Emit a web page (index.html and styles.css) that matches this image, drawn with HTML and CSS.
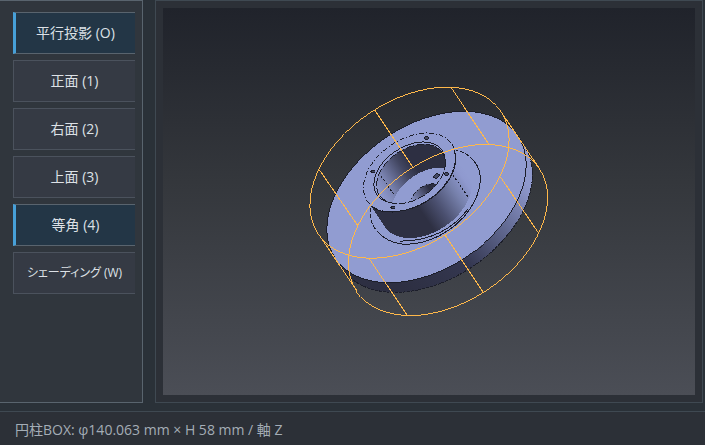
FILE: index.html
```html
<!DOCTYPE html>
<html lang="ja">
<head>
<meta charset="utf-8">
<title>3D ビュー</title>
<link rel="stylesheet" href="styles.css">
</head>
<body>
<div class="workspace">
  <nav class="sidebar" aria-label="表示">
    <button type="button" class="view-button active" aria-pressed="true">平行投影 (O)</button>
    <button type="button" class="view-button">正面 (1)</button>
    <button type="button" class="view-button">右面 (2)</button>
    <button type="button" class="view-button">上面 (3)</button>
    <button type="button" class="view-button active" aria-pressed="true">等角 (4)</button>
    <button type="button" class="view-button compact">シェーディング (W)</button>
  </nav>
  <main class="viewport">
    <svg class="scene" viewBox="163 8 532 387" role="img" aria-label="円柱BOX">
      <defs>
        <linearGradient id="rim" gradientUnits="userSpaceOnUse" x1="405" y1="290" x2="528" y2="185">
          <stop offset="0" stop-color="#2d2f42"/>
          <stop offset=".4" stop-color="#343750"/>
          <stop offset=".75" stop-color="#666e98"/>
          <stop offset="1" stop-color="#8f99cd"/>
        </linearGradient>
        <linearGradient id="hub" gradientUnits="userSpaceOnUse" x1="427" y1="220" x2="476" y2="187">
          <stop offset="0" stop-color="#2e3043"/>
          <stop offset=".3" stop-color="#4b5070"/>
          <stop offset=".65" stop-color="#7680ab"/>
          <stop offset=".9" stop-color="#8f99cf"/>
          <stop offset="1" stop-color="#919cd1"/>
        </linearGradient>
        <linearGradient id="bore" gradientUnits="userSpaceOnUse" x1="376" y1="192" x2="415" y2="166">
          <stop offset="0" stop-color="#919cd1"/>
          <stop offset=".3" stop-color="#7b84b2"/>
          <stop offset=".75" stop-color="#424661"/>
          <stop offset="1" stop-color="#2d2f42"/>
        </linearGradient>
        <linearGradient id="core" gradientUnits="userSpaceOnUse" x1="412" y1="202" x2="430" y2="190">
          <stop offset="0" stop-color="#8c96c9"/>
          <stop offset="1" stop-color="#2d2f42"/>
        </linearGradient>
        <clipPath id="bore-clip"><ellipse cx="411" cy="174" rx="38" ry="25" transform="rotate(-34 411 174)"/></clipPath>
        <clipPath id="core-clip"><ellipse cx="427" cy="198" rx="18" ry="12" transform="rotate(-34 427 198)"/></clipPath>
      </defs>

      <!-- disc -->
      <g class="edge">
        <path fill="url(#rim)" stroke-dasharray="3 1" d="M335.500 258.500 L342 268.500 A109 71 -34 0 0 524 145.500 L517.500 135.500Z"/>
        <ellipse class="face" cx="426.500" cy="197" rx="110" ry="72" transform="rotate(-34 426.500 197)"/>
      </g>
      <g class="groove">
        <path stroke-dasharray="4 2" d="M371 208 C369 217 372 226 378 232"/>
        <path d="M378 232 C385 240 393 243 402 244 C427 246 455 231 470 209 C482 191 484 171 473 160"/>
        <path stroke-dasharray="4 2" d="M473 160 C468 154 463 152 456 150"/>
        <path d="M399 241 C430 242 454 228 468 209"/>
      </g>

      <!-- hub -->
      <path fill="url(#hub)" d="M367.500 201 L385 227 A50 33 -34 0 0 468 171 L452 144Z"/>
      <path class="seam" d="M453 175 L468 197"/>
      <ellipse class="face" cx="409.500" cy="172.500" rx="51" ry="33" transform="rotate(-34 409.500 172.500)"/>
      <path class="groove" d="M371 206 C382 216 409 213 429 200 C450 186 460 164 454 150"/>
      <ellipse class="dashes" cx="409.500" cy="172.500" rx="51" ry="33" transform="rotate(-34 409.500 172.500)"/>

      <!-- bore -->
      <ellipse class="bore-edge" cx="409.500" cy="172.500" rx="39.500" ry="25.500" transform="rotate(-34 409.500 172.500)"/>
      <g clip-path="url(#bore-clip)">
        <rect x="370" y="138" width="80" height="70" fill="url(#bore)"/>
        <path class="seam" d="M381 176 L399 202"/>
        <ellipse class="face" cx="427" cy="198" rx="39" ry="25.500" transform="rotate(-34 427 198)"/>
        <g clip-path="url(#core-clip)">
          <rect x="405" y="180" width="45" height="35" fill="url(#core)"/>
          <ellipse class="face" cx="439" cy="216" rx="26" ry="17" transform="rotate(-34 439 216)"/>
        </g>
        <ellipse class="dashes" cx="427" cy="198" rx="18" ry="12" transform="rotate(-34 427 198)"/>
      </g>
      <ellipse class="bore-line" cx="411" cy="174" rx="38" ry="25" transform="rotate(-34 411 174)"/>
      <g class="hole">
        <ellipse cx="426.500" cy="138" rx="2" ry="1.500"/>
        <ellipse cx="373" cy="171.500" rx="2" ry="1.500"/>
        <ellipse cx="393" cy="207.500" rx="2" ry="1.500"/>
        <ellipse cx="446.500" cy="174" rx="2" ry="1.500"/>
        <ellipse cx="436.500" cy="176" rx="3" ry="2" transform="rotate(-34 436.500 176)"/>
      </g>

      <!-- bounding cylinder -->
      <g class="bounds">
        <ellipse cx="409.500" cy="172.700" rx="110" ry="71.700" transform="rotate(-34 409.500 172.700)"/>
        <ellipse cx="448" cy="230" rx="110" ry="71.700" transform="rotate(-34 448 230)"/>
        <path d="M375 110.500 L413 167.500 M451.500 88 L489 144.500 M319.500 170 L358 226 M369.500 259 L407 315 M445 235 L483 292 M500.500 177 L538.500 233 M500.500 111 L539 168 M318.500 234 L357 291"/>
      </g>
    </svg>
  </main>
</div>
<footer class="status">円柱BOX: φ140.063 mm × H 58 mm / 軸 Z</footer>
</body>
</html>
```
FILE: styles.css
```css
* { box-sizing: border-box; }

body {
  margin: 0;
  min-height: 100vh;
  display: flex;
  flex-direction: column;
  background: #2a3138;
  color: #dde1e6;
  font: 14px/20px "Open Sans", "Noto Sans CJK JP", sans-serif;
  font-feature-settings: "palt";
}

.workspace {
  flex: 1;
  display: flex;
  gap: 12px;
  padding: 0 2px 8px 0;
}

.sidebar {
  flex: 0 0 143px;
  display: flex;
  flex-direction: column;
  gap: 6px;
  padding: 11px 7px 11px 13px;
  background: #30363d;
  border: 1px solid #59646e;
  border-left: 0;
}

.view-button {
  height: 42px;
  padding: 0;
  border: 1px solid #4b525d;
  border-right: 0;
  background: #353a44;
  color: inherit;
  font: inherit;
  font-feature-settings: inherit;
  white-space: nowrap;
}

.view-button.active {
  border-color: #59646e;
  border-left: 3px solid #47a0d8;
  background: #233646;
}

.view-button.compact { font-size: 12px; }

.viewport {
  flex: 1;
  min-width: 0;
  display: flex;
  padding: 7px;
  border: 1px solid #3f4952;
  background: #2c3037;
}

.scene {
  flex: 1;
  min-width: 0;
  width: 100%;
  background: linear-gradient(#20232b, #34373c 45%, #4b4e56);
  shape-rendering: crispEdges;
}

.status {
  padding: 8px 15px 5px;
  border-top: 1px solid #3f4952;
  border-bottom: 1px solid #23262c;
  background: #2c3037;
  color: #a4adb6;
}

.face { fill: #919cd1; }
.edge { stroke: #1c1e2a; }
.groove { fill: none; stroke: #1c1e2a; }
.seam { fill: none; stroke: #1c1e2a; stroke-dasharray: 2 2; }
.dashes { fill: none; stroke: #1c1e2a; stroke-dasharray: 5 2 1 2; }
.bore-edge { fill: #919cd1; stroke: #1c1e2a; }
.bore-line { fill: none; stroke: #1c1e2a; stroke-dasharray: 8 2; }
.hole { fill: #454a66; stroke: #1c1e2a; }
.bounds { fill: none; stroke: #ffb84a; }
```
